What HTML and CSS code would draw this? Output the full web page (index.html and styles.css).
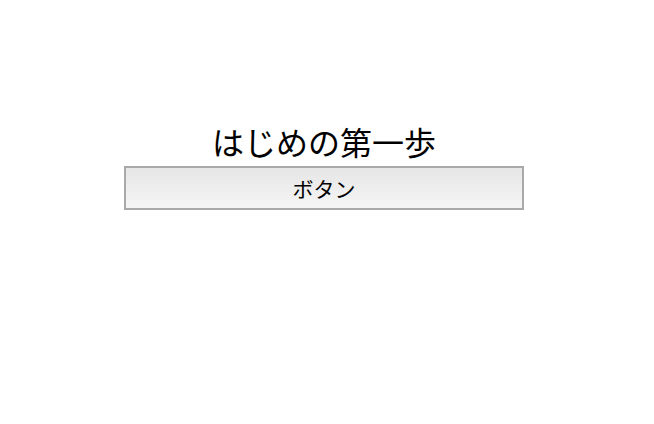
FILE: index.html
```html
<!DOCTYPE html>
<html lang="ja">
<head>
<meta charset="utf-8">
<link rel="stylesheet" href="styles.css">
</head>
<body>
<div class="wrap">
  <h1 class="title">はじめの第一歩</h1>
  <button class="btn">ボタン</button>
</div>
</body>
</html>
```
FILE: styles.css
```css
html, body { margin: 0; padding: 0; background: #fff; }
body { font-family: "Noto Sans CJK JP", "Noto Sans", sans-serif; color: #000; }
.wrap {
  width: 400px;
  margin-left: 124px;
  padding-top: 118px;
  display: flex;
  flex-direction: column;
}
.title {
  margin: 0;
  font-size: 32px;
  font-weight: normal;
  line-height: 46px;
  text-align: center;
}
.btn {
  margin-top: 2px;
  box-sizing: border-box;
  width: 400px;
  height: 44px;
  border: 2px solid #a9a9a9;
  background: linear-gradient(#e6e6e6, #f5f5f5);
  font-family: "Noto Sans CJK JP", sans-serif;
  font-size: 21px;
  color: #000;
  padding: 0;
}
```
